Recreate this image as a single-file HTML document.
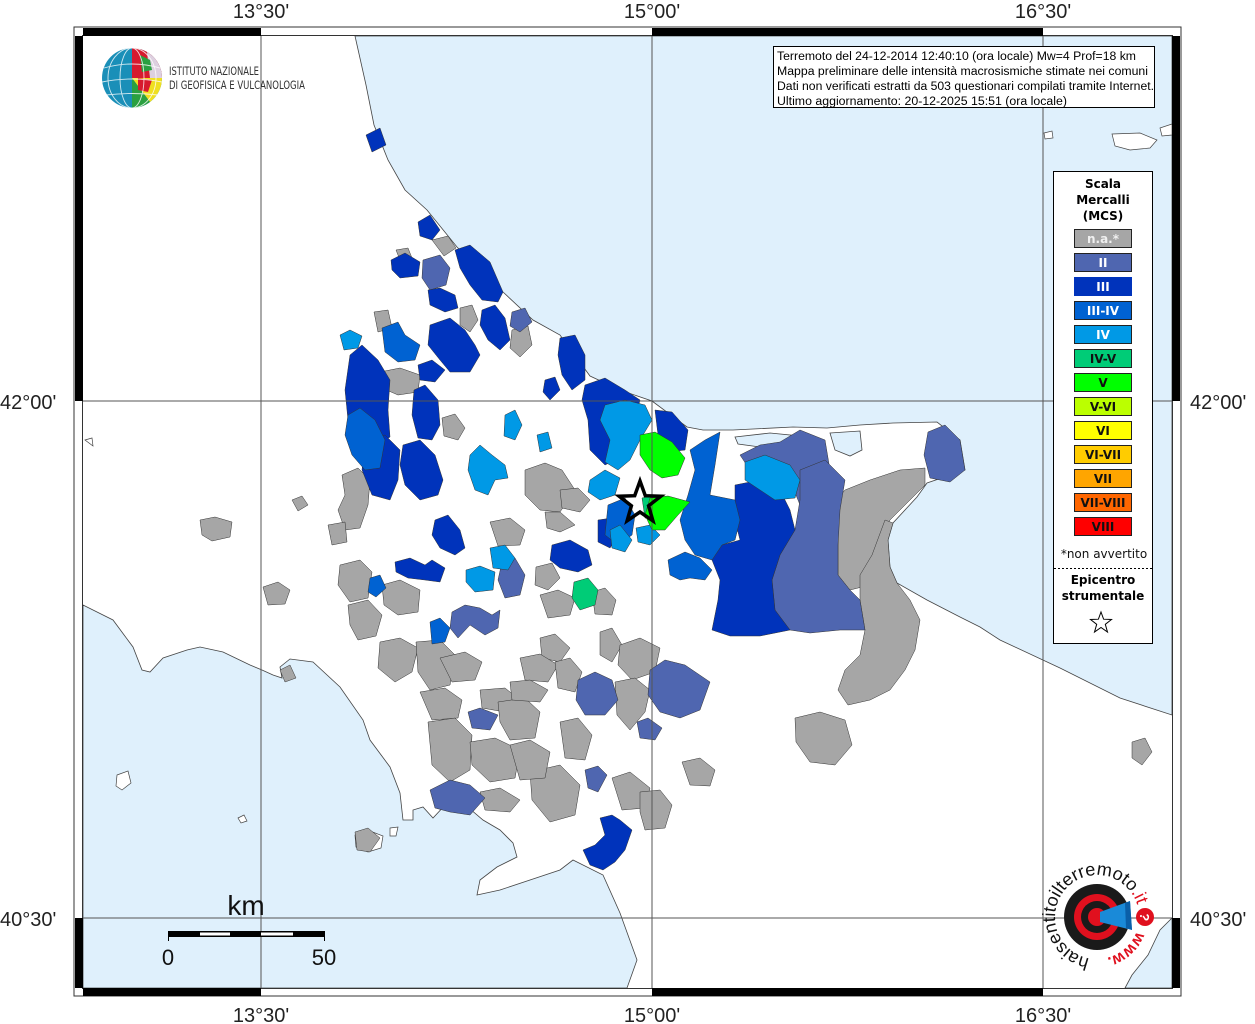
<!DOCTYPE html>
<html><head><meta charset="utf-8"><style>
html,body{margin:0;padding:0;background:#fff;}
svg{display:block;}
</style></head><body>
<svg width="1255" height="1024" viewBox="0 0 1255 1024" xmlns="http://www.w3.org/2000/svg" font-family="Liberation Sans, sans-serif">
<rect width="1255" height="1024" fill="#fff"/>
<rect x="83" y="36" width="1089" height="952" fill="#fff"/>
<g stroke="#444" stroke-width="0.8" fill="#dff0fc">
<path d="M355,36 L1172,36 L1172,715 L1120,698 L1060,668 L1000,640 L980,627 L960,617 L927,600 L897,583 L890,567 L888,540 L893,523 L917,497 L927,483 L965,470 L960,440 L937,422 L893,423 L860,425 L827,428 L793,427 L733,430 L703,430 L687,427 L652,401 L620,390 L590,376 L560,335 L533,320 L503,292 L457,247 L427,210 L405,190 L388,160 L374,125 L366,85 Z"/>
<path d="M83,605 L113,620 L133,647 L142,670 L150,672 L163,658 L187,650 L200,647 L223,652 L250,665 L262,670 L273,675 L282,678 L280,667 L290,659 L313,662 L340,687 L363,720 L370,740 L390,767 L400,793 L403,820 L413,820 L413,810 L423,807 L433,818 L447,803 L463,803 L483,820 L500,830 L513,843 L517,857 L497,867 L480,880 L477,895 L500,890 L530,880 L560,870 L573,860 L603,875 L620,913 L637,960 L627,988 L83,988 Z"/>
<path d="M1172,918 L1160,930 L1148,955 L1132,975 L1125,988 L1172,988 Z"/>
<path d="M735,437 L770,433 L800,436 L795,445 L760,447 L738,444 Z"/>
<path d="M830,433 L860,431 L862,450 L850,456 L835,450 Z"/>
</g>
<g fill="#fff" stroke="#444" stroke-width="0.7">
<path d="M355,835 L370,831 L383,836 L381,848 L368,852 L356,847 Z"/>
<path d="M390,828 L398,827 L396,836 L390,836Z"/>
<path d="M117,775 L128,771 L131,783 L122,790 L116,786 Z"/>
<path d="M238,818 L244,815 L247,821 L241,823Z"/>
<path d="M1112,134 L1140,133 L1157,140 L1150,148 L1130,150 L1115,146 Z"/>
<path d="M1044,133 L1052,131 L1053,138 L1045,139Z"/>
<path d="M1160,128 L1172,124 L1172,135 L1162,136Z"/>
<path d="M85,440 L92,438 L93,446Z"/>
</g>

<g stroke="#333" stroke-width="0.5">
<g fill="#a6a6a6">
<path d="M200,520 L215,517 L232,522 L230,537 L212,541 L202,535Z"/>
<path d="M263,587 L278,582 L290,590 L285,604 L268,605Z"/>
<path d="M292,500 L302,496 L308,505 L298,511Z"/>
<path d="M342,475 L358,468 L370,480 L368,505 L360,528 L345,530 L338,510 L345,495Z"/>
<path d="M328,525 L345,522 L347,542 L332,545Z"/>
<path d="M340,565 L360,560 L372,572 L368,598 L350,602 L338,585Z"/>
<path d="M348,605 L368,600 L382,615 L376,636 L358,640 L350,625Z"/>
<path d="M382,585 L400,580 L420,590 L418,612 L398,615 L384,605Z"/>
<path d="M380,642 L400,638 L418,648 L412,672 L395,682 L378,668Z"/>
<path d="M416,642 L440,640 L455,655 L450,685 L430,690 L418,672Z"/>
<path d="M440,658 L465,652 L482,662 L475,680 L452,682Z"/>
<path d="M420,692 L445,688 L462,700 L458,718 L432,720Z"/>
<path d="M428,722 L455,718 L472,735 L470,770 L450,782 L432,765Z"/>
<path d="M470,742 L495,738 L520,750 L515,778 L490,782 L472,765Z"/>
<path d="M480,690 L505,688 L520,700 L505,712 L482,708Z"/>
<path d="M498,702 L525,698 L540,712 L535,738 L510,740 L500,722Z"/>
<path d="M525,470 L545,463 L562,470 L575,490 L560,512 L540,510 L525,495Z"/>
<path d="M560,490 L578,488 L590,500 L580,512 L562,508Z"/>
<path d="M490,522 L510,518 L525,530 L520,545 L498,546Z"/>
<path d="M536,567 L552,563 L560,578 L548,590 L535,585Z"/>
<path d="M540,595 L558,590 L575,598 L570,615 L548,618Z"/>
<path d="M592,592 L605,588 L616,600 L612,615 L595,614Z"/>
<path d="M540,638 L555,634 L570,648 L560,662 L542,658Z"/>
<path d="M520,658 L540,654 L558,665 L548,682 L525,680Z"/>
<path d="M510,682 L530,680 L548,690 L540,702 L512,700Z"/>
<path d="M555,662 L570,658 L582,672 L575,692 L558,688Z"/>
<path d="M600,632 L612,628 L622,645 L612,662 L600,655Z"/>
<path d="M620,645 L640,638 L660,648 L655,672 L632,680 L618,665Z"/>
<path d="M615,682 L635,678 L650,690 L645,712 L630,730 L617,715Z"/>
<path d="M560,722 L578,718 L592,735 L585,760 L565,758Z"/>
<path d="M530,772 L560,765 L580,785 L575,815 L550,822 L532,800Z"/>
<path d="M510,745 L530,740 L550,752 L545,778 L520,780Z"/>
<path d="M480,792 L500,788 L520,800 L510,812 L485,810Z"/>
<path d="M612,778 L630,772 L650,788 L645,808 L622,810Z"/>
<path d="M640,792 L660,790 L672,805 L665,828 L645,830 L640,812Z"/>
<path d="M682,762 L700,758 L715,770 L710,786 L690,785Z"/>
<path d="M795,718 L820,712 L845,720 L852,745 L835,765 L810,762 L796,742Z"/>
<path d="M355,832 L368,828 L380,838 L370,852 L357,850Z"/>
<path d="M870,480 L900,470 L925,468 L925,485 L910,500 L890,520 L878,540 L880,570 L870,585 L850,590 L838,575 L838,540 L832,505 L845,490Z"/>
<path d="M885,520 L893,523 L888,540 L890,567 L897,583 L910,600 L920,620 L915,650 L905,670 L890,690 L870,700 L848,705 L838,690 L845,670 L860,655 L865,630 L860,600 L860,575 L872,555Z"/>
<path d="M1132,742 L1145,738 L1152,752 L1142,765 L1132,758Z"/>
<path d="M380,372 L400,368 L420,375 L418,392 L398,395 L382,388Z"/>
<path d="M442,418 L455,414 L465,428 L458,440 L444,436Z"/>
<path d="M512,330 L528,326 L532,345 L520,357 L510,348Z"/>
<path d="M432,240 L448,236 L456,248 L444,256Z"/>
<path d="M374,312 L388,310 L392,328 L378,332Z"/>
<path d="M460,308 L472,305 L478,320 L470,332 L460,325Z"/>
<path d="M396,250 L408,248 L412,258 L400,260Z"/>
<path d="M545,512 L560,512 L575,525 L560,532 L547,528Z"/>
<path d="M280,670 L290,665 L296,678 L285,682Z"/>
</g>
<g fill="#4f66b0">
<path d="M423,260 L440,255 L450,268 L446,285 L430,290 L422,278Z"/>
<path d="M512,312 L525,308 L532,322 L520,332 L510,326Z"/>
<path d="M740,455 L760,445 L780,442 L800,430 L825,440 L830,470 L815,500 L800,505 L790,480 L770,470 L750,470Z"/>
<path d="M928,432 L945,425 L960,440 L965,470 L950,482 L930,478 L924,455Z"/>
<path d="M800,470 L825,460 L845,480 L840,510 L838,545 L838,575 L850,590 L860,600 L865,630 L840,630 L810,633 L790,630 L775,610 L772,580 L780,555 L795,530 L800,500Z"/>
<path d="M502,562 L515,558 L525,575 L520,595 L505,598 L498,580Z"/>
<path d="M452,612 L465,605 L480,608 L492,615 L500,610 L498,628 L485,635 L470,625 L458,638 L450,628Z"/>
<path d="M578,680 L595,672 L612,680 L618,700 L605,715 L585,715 L576,700Z"/>
<path d="M650,670 L665,660 L685,665 L710,682 L700,710 L680,718 L660,712 L648,695Z"/>
<path d="M430,790 L450,780 L470,785 L485,798 L470,815 L450,812 L435,808Z"/>
<path d="M468,712 L480,708 L498,715 L490,730 L472,728Z"/>
<path d="M585,770 L598,766 L607,775 L598,792 L588,788Z"/>
<path d="M637,722 L648,718 L662,728 L655,740 L640,738Z"/>
</g>
<g fill="#0033bb">
<path d="M366,135 L380,128 L386,145 L372,152Z"/>
<path d="M418,222 L430,215 L440,230 L432,240 L420,236Z"/>
<path d="M391,260 L405,253 L420,262 L418,276 L400,278 L392,270Z"/>
<path d="M428,290 L440,288 L455,295 L458,308 L445,312 L430,305Z"/>
<path d="M455,250 L470,245 L490,262 L503,292 L498,302 L482,300 L470,285 L460,268Z"/>
<path d="M482,310 L495,305 L505,318 L510,340 L500,350 L488,340 L480,325Z"/>
<path d="M430,325 L450,318 L465,330 L475,345 L480,355 L470,372 L450,372 L440,360 L428,345Z"/>
<path d="M418,365 L432,360 L445,370 L435,382 L420,380Z"/>
<path d="M350,355 L362,345 L378,360 L390,380 L388,410 L390,437 L378,445 L360,440 L348,420 L345,390Z"/>
<path d="M365,440 L385,435 L400,450 L398,480 L390,500 L372,495 L362,470Z"/>
<path d="M414,390 L425,385 L438,400 L440,425 L432,440 L418,438 L412,415Z"/>
<path d="M403,445 L420,440 L435,455 L443,480 L438,495 L420,500 L405,485 L400,465Z"/>
<path d="M545,380 L555,377 L560,390 L550,400 L543,392Z"/>
<path d="M560,338 L575,335 L585,355 L585,380 L572,390 L562,375 L558,355Z"/>
<path d="M585,385 L605,378 L625,390 L640,400 L635,420 L620,435 L625,455 L605,465 L590,450 L588,420 L582,400Z"/>
<path d="M655,410 L672,412 L688,430 L685,450 L668,452 L658,435Z"/>
<path d="M552,545 L570,540 L588,550 L592,565 L578,572 L560,568 L550,560Z"/>
<path d="M395,562 L410,558 L425,565 L432,560 L445,568 L440,582 L425,580 L408,578 L396,572Z"/>
<path d="M435,520 L448,515 L460,530 L465,548 L455,555 L440,548 L432,535Z"/>
<path d="M735,485 L760,480 L780,490 L790,510 L795,530 L780,555 L772,580 L775,610 L790,630 L760,636 L730,636 L712,630 L718,600 L720,580 L712,560 L722,545 L740,540 L735,520 Z"/>
<path d="M600,818 L612,815 L620,820 L632,830 L625,850 L615,862 L603,870 L590,865 L583,850 L595,845 L605,835Z"/>
<path d="M598,520 L612,518 L618,535 L610,548 L598,542Z"/>
</g>
<g fill="#0062d2">
<path d="M348,415 L360,408 L375,420 L385,440 L380,468 L365,470 L352,455 L345,435Z"/>
<path d="M382,328 L398,322 L405,335 L420,345 L415,360 L398,362 L385,352Z"/>
<path d="M690,450 L705,440 L720,432 L715,465 L710,495 L735,500 L740,520 L735,540 L722,545 L712,560 L695,555 L685,540 L680,520 L688,495 L695,470Z"/>
<path d="M430,622 L440,618 L450,628 L445,642 L432,644Z"/>
<path d="M370,578 L380,575 L386,588 L376,597 L368,592Z"/>
<path d="M608,505 L625,498 L635,515 L632,535 L618,545 L605,535Z"/>
<path d="M668,560 L685,552 L700,558 L712,570 L705,580 L690,578 L680,580 L670,575Z"/>
</g>
<g fill="#0099e6">
<path d="M340,335 L350,330 L362,336 L358,348 L344,350Z"/>
<path d="M470,455 L480,445 L492,455 L505,465 L508,478 L495,480 L488,495 L475,490 L468,470Z"/>
<path d="M505,415 L515,410 L522,425 L515,440 L504,436Z"/>
<path d="M537,435 L548,432 L552,448 L540,452Z"/>
<path d="M490,548 L505,545 L515,558 L508,570 L493,568Z"/>
<path d="M466,570 L480,566 L495,572 L493,590 L475,592 L466,582Z"/>
<path d="M605,405 L625,400 L645,405 L652,420 L640,440 L630,460 L618,470 L605,462 L610,440 L600,420Z"/>
<path d="M745,462 L765,455 L790,465 L800,480 L795,498 L775,500 L760,490 L745,480Z"/>
<path d="M590,480 L605,470 L620,478 L615,495 L600,500 L588,492Z"/>
<path d="M610,530 L620,525 L632,540 L625,552 L612,548Z"/>
<path d="M636,528 L650,525 L660,535 L650,545 L638,542Z"/>
</g>
<g fill="#00cc77">
<path d="M574,582 L588,578 L598,590 L595,605 L580,610 L572,598Z"/>
<path d="M642,498 L655,495 L668,505 L660,520 L645,518Z"/>
</g>
<g fill="#00ff00">
<path d="M640,435 L655,432 L672,442 L685,458 L678,475 L662,478 L650,470 L640,455Z"/>
<path d="M650,498 L668,496 L690,502 L678,515 L665,530 L652,530 L645,515Z"/>
</g>
</g>

<g stroke="#555" stroke-width="1">
<line x1="261" y1="36" x2="261" y2="988"/>
<line x1="652" y1="36" x2="652" y2="988"/>
<line x1="1043" y1="36" x2="1043" y2="988"/>
<line x1="83" y1="401" x2="1172" y2="401"/>
<line x1="83" y1="918" x2="1172" y2="918"/>
</g>

<polygon points="640,481 645.3,495.7 660.9,496.2 648.6,505.8 652.9,520.8 640,512 627.1,520.8 631.4,505.8 619.1,496.2 634.7,495.7" fill="none" stroke="#000" stroke-width="3.5" stroke-linejoin="miter"/>

<rect x="74" y="27" width="1107" height="969" fill="none" stroke="#333" stroke-width="1"/>
<rect x="82.5" y="35.5" width="1090" height="953" fill="none" stroke="#333" stroke-width="1"/>
<g fill="#000">
<rect x="83" y="28" width="178" height="8"/>
<rect x="652" y="28" width="391" height="8"/>
<rect x="83" y="988" width="178" height="8"/>
<rect x="652" y="988" width="391" height="8"/>
<rect x="75" y="36" width="8" height="365"/>
<rect x="75" y="918" width="8" height="70"/>
<rect x="1172" y="36" width="8" height="365"/>
<rect x="1172" y="918" width="8" height="70"/>
</g>

<g font-size="20" fill="#222">
<text x="261" y="18" text-anchor="middle">13°30'</text>
<text x="652" y="18" text-anchor="middle">15°00'</text>
<text x="1043" y="18" text-anchor="middle">16°30'</text>
<text x="261" y="1022" text-anchor="middle">13°30'</text>
<text x="652" y="1022" text-anchor="middle">15°00'</text>
<text x="1043" y="1022" text-anchor="middle">16°30'</text>
<text x="0" y="409">42°00'</text>
<text x="0" y="926">40°30'</text>
<text x="1190" y="409">42°00'</text>
<text x="1190" y="926">40°30'</text>
</g>

<g>
<circle cx="132" cy="78" r="30" fill="#1a8fb8"/>
<path d="M132,48 A30,30 0 0,1 162,78 L132,78Z" fill="#d71a2e"/>
<path d="M147,52 A30,30 0 0,1 162,78 L150,78 Z" fill="#ddd0e0"/>
<path d="M132,78 L162,78 A30,30 0 0,1 150,102 Z" fill="#f0e020"/>
<path d="M132,78 L150,102 A30,30 0 0,1 132,108 Z" fill="#2aa040"/>
<path d="M140,55 L150,60 L152,70 L142,72 Z" fill="#2aa040"/>
<path d="M138,78 L152,80 L148,92 L138,90Z" fill="#d71a2e"/>
<g stroke="#fff" stroke-width="0.9" fill="none" opacity="0.8">
<ellipse cx="132" cy="78" rx="12" ry="30"/>
<ellipse cx="132" cy="78" rx="24" ry="30"/>
<path d="M104,68 Q132,60 160,68"/><path d="M102,82 Q132,76 162,82"/><path d="M106,95 Q132,92 158,95"/>
</g>
<text x="169" y="75" font-size="11.5" fill="#333" textLength="90" lengthAdjust="spacingAndGlyphs" font-family="DejaVu Sans Condensed, Liberation Sans Narrow, sans-serif">ISTITUTO NAZIONALE</text>
<text x="169" y="89" font-size="11.5" fill="#333" textLength="136" lengthAdjust="spacingAndGlyphs" font-family="DejaVu Sans Condensed, Liberation Sans Narrow, sans-serif">DI GEOFISICA E VULCANOLOGIA</text>
</g>

<rect x="773.5" y="46.5" width="381" height="61" fill="#fff" stroke="#000" stroke-width="1"/>
<g font-size="11.5" fill="#000">
<text x="777" y="60" textLength="359" lengthAdjust="spacingAndGlyphs">Terremoto del 24-12-2014 12:40:10 (ora locale) Mw=4 Prof=18 km</text>
<text x="777" y="75" textLength="371" lengthAdjust="spacingAndGlyphs">Mappa preliminare delle intensità macrosismiche stimate nei comuni</text>
<text x="777" y="90" textLength="377" lengthAdjust="spacingAndGlyphs">Dati non verificati estratti da 503 questionari compilati tramite Internet.</text>
<text x="777" y="105" textLength="290" lengthAdjust="spacingAndGlyphs">Ultimo aggiornamento: 20-12-2025 15:51 (ora locale)</text>
</g>

<rect x="1053.5" y="171.5" width="99" height="472" fill="#fff" stroke="#000" stroke-width="1"/>
<g font-family="DejaVu Sans, sans-serif" font-weight="bold" font-size="12" text-anchor="middle">
<text x="1103" y="188">Scala</text>
<text x="1103" y="204">Mercalli</text>
<text x="1103" y="220">(MCS)</text>
</g>
<g stroke="#222" stroke-width="1">
<rect x="1074.5" y="229.5" width="57" height="18" fill="#a6a6a6"/>
<rect x="1074.5" y="253.5" width="57" height="18" fill="#4f66b0"/>
<rect x="1074.5" y="277.5" width="57" height="18" fill="#0033bb" stroke="#0033bb"/>
<rect x="1074.5" y="301.5" width="57" height="18" fill="#0062d2"/>
<rect x="1074.5" y="325.5" width="57" height="18" fill="#0099e6"/>
<rect x="1074.5" y="349.5" width="57" height="18" fill="#00cc77"/>
<rect x="1074.5" y="373.5" width="57" height="18" fill="#00ff00"/>
<rect x="1074.5" y="397.5" width="57" height="18" fill="#bbff00"/>
<rect x="1074.5" y="421.5" width="57" height="18" fill="#ffff00"/>
<rect x="1074.5" y="445.5" width="57" height="18" fill="#ffcc00"/>
<rect x="1074.5" y="469.5" width="57" height="18" fill="#ffa500"/>
<rect x="1074.5" y="493.5" width="57" height="18" fill="#ff6600"/>
<rect x="1074.5" y="517.5" width="57" height="18" fill="#ff0000"/>
</g>
<g font-family="DejaVu Sans, sans-serif" font-weight="bold" font-size="12" text-anchor="middle">
<text x="1103" y="243" fill="#f0f0f0">n.a.*</text>
<text x="1103" y="267" fill="#fff">II</text>
<text x="1103" y="291" fill="#fff">III</text>
<text x="1103" y="315" fill="#fff">III-IV</text>
<text x="1103" y="339" fill="#fff">IV</text>
<text x="1103" y="363" fill="#111">IV-V</text>
<text x="1103" y="387" fill="#111">V</text>
<text x="1103" y="411" fill="#111">V-VI</text>
<text x="1103" y="435" fill="#111">VI</text>
<text x="1103" y="459" fill="#111">VI-VII</text>
<text x="1103" y="483" fill="#111">VII</text>
<text x="1103" y="507" fill="#111">VII-VIII</text>
<text x="1103" y="531" fill="#111">VIII</text>
</g>
<text x="1104" y="558" font-family="DejaVu Sans, sans-serif" font-size="12" text-anchor="middle" fill="#111">*non avvertito</text>
<line x1="1054" y1="568.5" x2="1152" y2="568.5" stroke="#000" stroke-dasharray="2,2"/>
<g font-family="DejaVu Sans, sans-serif" font-weight="bold" font-size="12" text-anchor="middle">
<text x="1103" y="584">Epicentro</text>
<text x="1103" y="600">strumentale</text>
</g>
<polygon points="1101,612 1103.6,619.2 1111.5,619.5 1105.3,624.3 1107.5,632 1101,627.5 1094.5,632 1096.7,624.3 1090.5,619.5 1098.4,619.2" fill="none" stroke="#000" stroke-width="1"/>

<text x="246" y="915" font-size="28" text-anchor="middle" fill="#111">km</text>
<rect x="168" y="931" width="157" height="6" fill="#000"/>
<rect x="200" y="932.5" width="30" height="3" fill="#fff"/>
<rect x="261" y="932.5" width="32" height="3" fill="#fff"/>
<line x1="168.5" y1="931" x2="168.5" y2="941" stroke="#000"/>
<line x1="324.5" y1="931" x2="324.5" y2="941" stroke="#000"/>
<text x="168" y="965" font-size="22" text-anchor="middle" fill="#111">0</text>
<text x="324" y="965" font-size="22" text-anchor="middle" fill="#111">50</text>

<g>
<circle cx="1097" cy="917" r="33" fill="#1a1a1a"/>
<circle cx="1097" cy="917" r="23" fill="#e0101e"/>
<circle cx="1097" cy="917" r="16" fill="#1a1a1a"/>
<circle cx="1097" cy="917" r="9" fill="#e0101e"/>
<path d="M1100,912 L1130,901 L1132,930 L1100,922 Z" fill="#1a8ad8"/>
<path d="M1125,903 L1130,901 L1132,930 L1126,928Z" fill="#0a5fa8"/>
<circle cx="1145" cy="917" r="9" fill="#e0101e"/>
<text x="1145" y="922" font-size="13" font-weight="bold" fill="#fff" text-anchor="middle" transform="rotate(100 1145 917)">?</text>
<defs>
<path id="arc1" d="M1089.7,958.4 A42,42 0 1,1 1138.4,909.7"/>
<path id="arc2" d="M1136.5,931.4 A42,42 0 0,1 1100.7,958.8"/>
</defs>
<text font-size="18" fill="#111" textLength="178" lengthAdjust="spacingAndGlyphs"><textPath href="#arc1" textLength="178" lengthAdjust="spacingAndGlyphs">haisentitoilterremoto<tspan fill="#e0101e">.it</tspan></textPath></text>
<text font-size="16" font-weight="bold" fill="#e0101e"><textPath href="#arc2">www.</textPath></text>
</g>
</svg>
</body></html>
